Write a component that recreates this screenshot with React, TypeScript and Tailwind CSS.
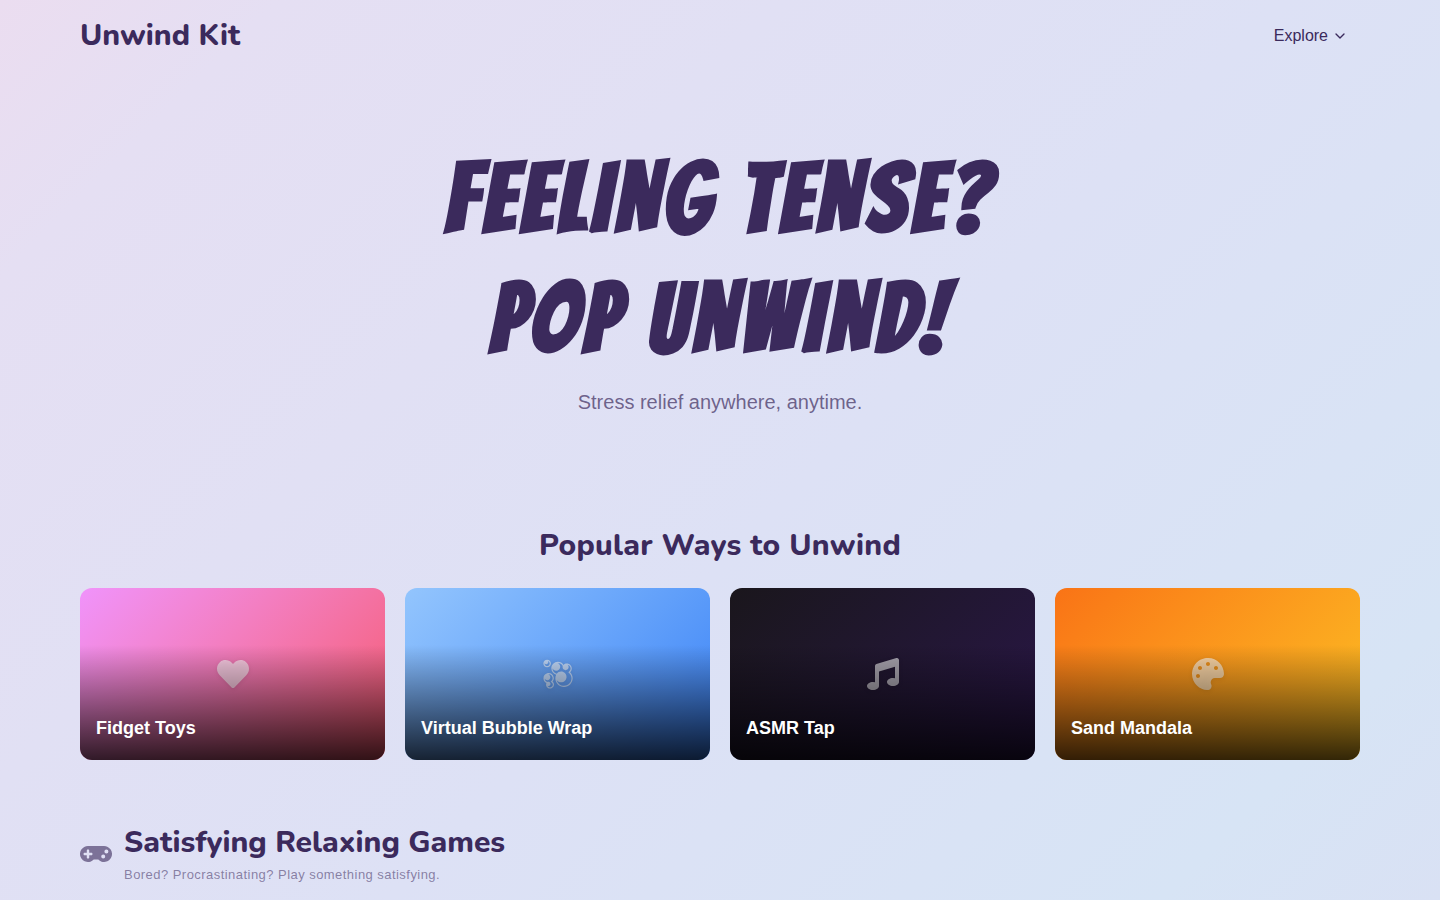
import type { FC, ReactNode } from "react";
import { FaGamepad, FaHeart, FaMusic, FaPalette } from "react-icons/fa";
import { FiChevronDown } from "react-icons/fi";
import { GiBubbles } from "react-icons/gi";

interface Activity {
  title: string;
  icon: ReactNode;
  background: string;
}

const activities: Activity[] = [
  {
    title: "Fidget Toys",
    icon: <FaHeart />,
    background: "from-[#f093fb] to-[#f5576c]",
  },
  {
    title: "Virtual Bubble Wrap",
    icon: <GiBubbles />,
    background: "from-[#93c5fd] to-[#3b82f6]",
  },
  {
    title: "ASMR Tap",
    icon: <FaMusic />,
    background: "from-[#1a161c] to-[#2a1548]",
  },
  {
    title: "Sand Mandala",
    icon: <FaPalette />,
    background: "from-[#f97316] to-[#fbbf24]",
  },
];

const Header: FC = () => (
  <header className="flex h-[70px] items-center justify-between">
    <a href="#" className="font-[Nunito,sans-serif] text-[30px] font-extrabold">
      Unwind Kit
    </a>
    <button
      type="button"
      className="flex items-center gap-1 px-3 pt-px text-base"
    >
      Explore
      <FiChevronDown className="size-4" />
    </button>
  </header>
);

const ActivityCard: FC<Activity> = ({ title, icon, background }) => (
  <a
    href="#"
    className={`relative flex h-[172px] items-center justify-center overflow-hidden rounded-xl bg-linear-135 ${background}`}
  >
    <span className="text-[32px] text-white/60 drop-shadow-sm">{icon}</span>
    <span className="absolute inset-x-0 bottom-0 flex h-[115px] items-end bg-linear-to-t from-black/80 to-transparent px-4 pb-[18px] text-lg font-bold text-white">
      {title}
    </span>
  </a>
);

export default function App() {
  return (
    <div className="min-h-screen bg-[linear-gradient(135deg,#ebddf0,#e5dff3_12%,#dde1f5_55%,#d7e4f5_88%,#d9e1f4)] font-['Liberation_Sans',Arial,sans-serif] text-[#3b2a5c]">
      <div className="mx-auto max-w-[1280px]">
        <Header />
        <section className="pt-[68px] text-center">
          <h1 className="font-[Bangers,sans-serif] text-[96px] leading-[120px] font-bold tracking-wider">
            FEELING TENSE?
            <br />
            POP UNWIND!
          </h1>
          <p className="mt-2.5 text-xl text-[#3b2a5c]/70">
            Stress relief anywhere, anytime.
          </p>
        </section>
        <section className="pt-[107px]">
          <h2 className="text-center font-[Nunito,sans-serif] text-[30px] leading-[46px] font-extrabold tracking-[0.01em]">
            Popular Ways to Unwind
          </h2>
          <div className="mt-[19px] grid grid-cols-4 gap-5">
            {activities.map((activity) => (
              <ActivityCard key={activity.title} {...activity} />
            ))}
          </div>
        </section>
        <section className="flex items-center gap-3 pt-[60px]">
          <FaGamepad className="mt-1 size-8 opacity-60" />
          <div>
            <h2 className="font-[Nunito,sans-serif] text-[30px] leading-[45px] font-extrabold">
              Satisfying Relaxing Games
            </h2>
            <p className="text-[13px] tracking-[0.035em] text-[#3b2a5c]/55">
              Bored? Procrastinating? Play something satisfying.
            </p>
          </div>
        </section>
      </div>
    </div>
  );
}
